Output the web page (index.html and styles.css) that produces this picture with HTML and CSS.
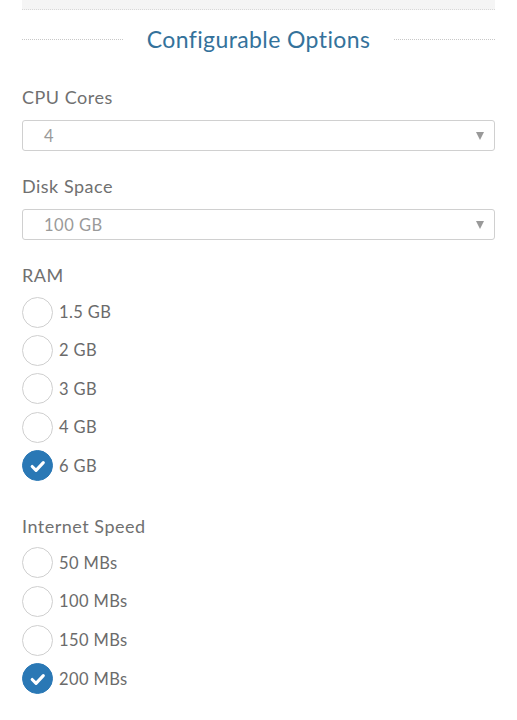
FILE: index.html
```html
<!DOCTYPE html>
<html>
<head>
<meta charset="utf-8">
<link rel="stylesheet" href="styles.css">
</head>
<body>
<div class="page">
  <div class="topbar"></div>
  <div class="heading">
    <span class="rule"></span>
    <h2 class="heading-text">Configurable Options</h2>
    <span class="rule"></span>
  </div>

  <div class="field field-cpu">
    <div class="label">CPU Cores</div>
    <div class="select"><span class="select-value">4</span><span class="caret"></span></div>
  </div>

  <div class="field field-disk">
    <div class="label">Disk Space</div>
    <div class="select"><span class="select-value">100 GB</span><span class="caret"></span></div>
  </div>

  <div class="field group">
    <div class="label">RAM</div>
    <div class="radios">
      <div class="radio"><span class="circle"></span><span class="radio-text">1.5 GB</span></div>
      <div class="radio"><span class="circle"></span><span class="radio-text">2 GB</span></div>
      <div class="radio"><span class="circle"></span><span class="radio-text">3 GB</span></div>
      <div class="radio"><span class="circle"></span><span class="radio-text">4 GB</span></div>
      <div class="radio"><span class="circle checked"><svg viewBox="0 0 30 30" width="30" height="30"><path d="M9.5 15.5 L13.5 19.5 L21 11.5" fill="none" stroke="#fff" stroke-width="3.2" stroke-linecap="round" stroke-linejoin="round"/></svg></span><span class="radio-text">6 GB</span></div>
    </div>
  </div>

  <div class="field group2">
    <div class="label">Internet Speed</div>
    <div class="radios radios2">
      <div class="radio"><span class="circle"></span><span class="radio-text">50 MBs</span></div>
      <div class="radio"><span class="circle"></span><span class="radio-text">100 MBs</span></div>
      <div class="radio"><span class="circle"></span><span class="radio-text">150 MBs</span></div>
      <div class="radio"><span class="circle checked"><svg viewBox="0 0 30 30" width="30" height="30"><path d="M9.5 15.5 L13.5 19.5 L21 11.5" fill="none" stroke="#fff" stroke-width="3.2" stroke-linecap="round" stroke-linejoin="round"/></svg></span><span class="radio-text">200 MBs</span></div>
    </div>
  </div>
</div>
</body>
</html>
```
FILE: styles.css
```css
* { box-sizing: border-box; }
html, body { margin: 0; padding: 0; background: #fff; }
body { font-family: "Lato", "Open Sans", sans-serif; color: #666; }
.page { padding: 0 22px; width: 517px; }
.topbar { height: 10px; background: #f5f5f5; border-bottom: 1px dotted #d8d8d8; }
.heading { display: flex; align-items: center; height: 40px; margin-top: 9px; }
.rule { flex: 1; border-top: 1px dotted #c8c8c8; height: 0; }
.heading-text { margin: 0 24px; font-weight: 400; font-size: 23px; color: #34729b; letter-spacing: 0.4px; line-height: 40px; }
.field { display: flex; flex-direction: column; }
.label { font-size: 18px; letter-spacing: 0.5px; color: #707070; height: 24px; line-height: 24px; margin-top: 23px; margin-bottom: 11px; }
.field-cpu .label { margin-top: 26px; }
.select { height: 31px; border: 1px solid #d0d0d0; border-radius: 3px; display: flex; align-items: center; justify-content: space-between; padding: 0 10px 0 21px; }
.select-value { font-size: 16.5px; letter-spacing: 0.5px; color: #9a9a9a; }
.caret { width: 0; height: 0; border-left: 4px solid transparent; border-right: 4px solid transparent; border-top: 8px solid #999; }
.group .label { margin-top: 23px; margin-bottom: 10px; }
.radios { display: flex; flex-direction: column; gap: 8.4px; }
.radio { display: flex; align-items: center; height: 30px; }
.circle { width: 31px; height: 31px; border-radius: 50%; border: 1.5px solid #cfcfcf; margin-right: 6px; display: flex; align-items: center; justify-content: center; flex: none; }
.circle.checked { background: #2a78b5; border-color: #2a78b5; }
.circle svg { display: block; }
.radio-text { font-size: 16.5px; letter-spacing: 0.4px; color: #6b6b6b; }
.group2 .label { margin-top: 33px; margin-bottom: 10px; }
.radios2 { gap: 8.8px; }
```
